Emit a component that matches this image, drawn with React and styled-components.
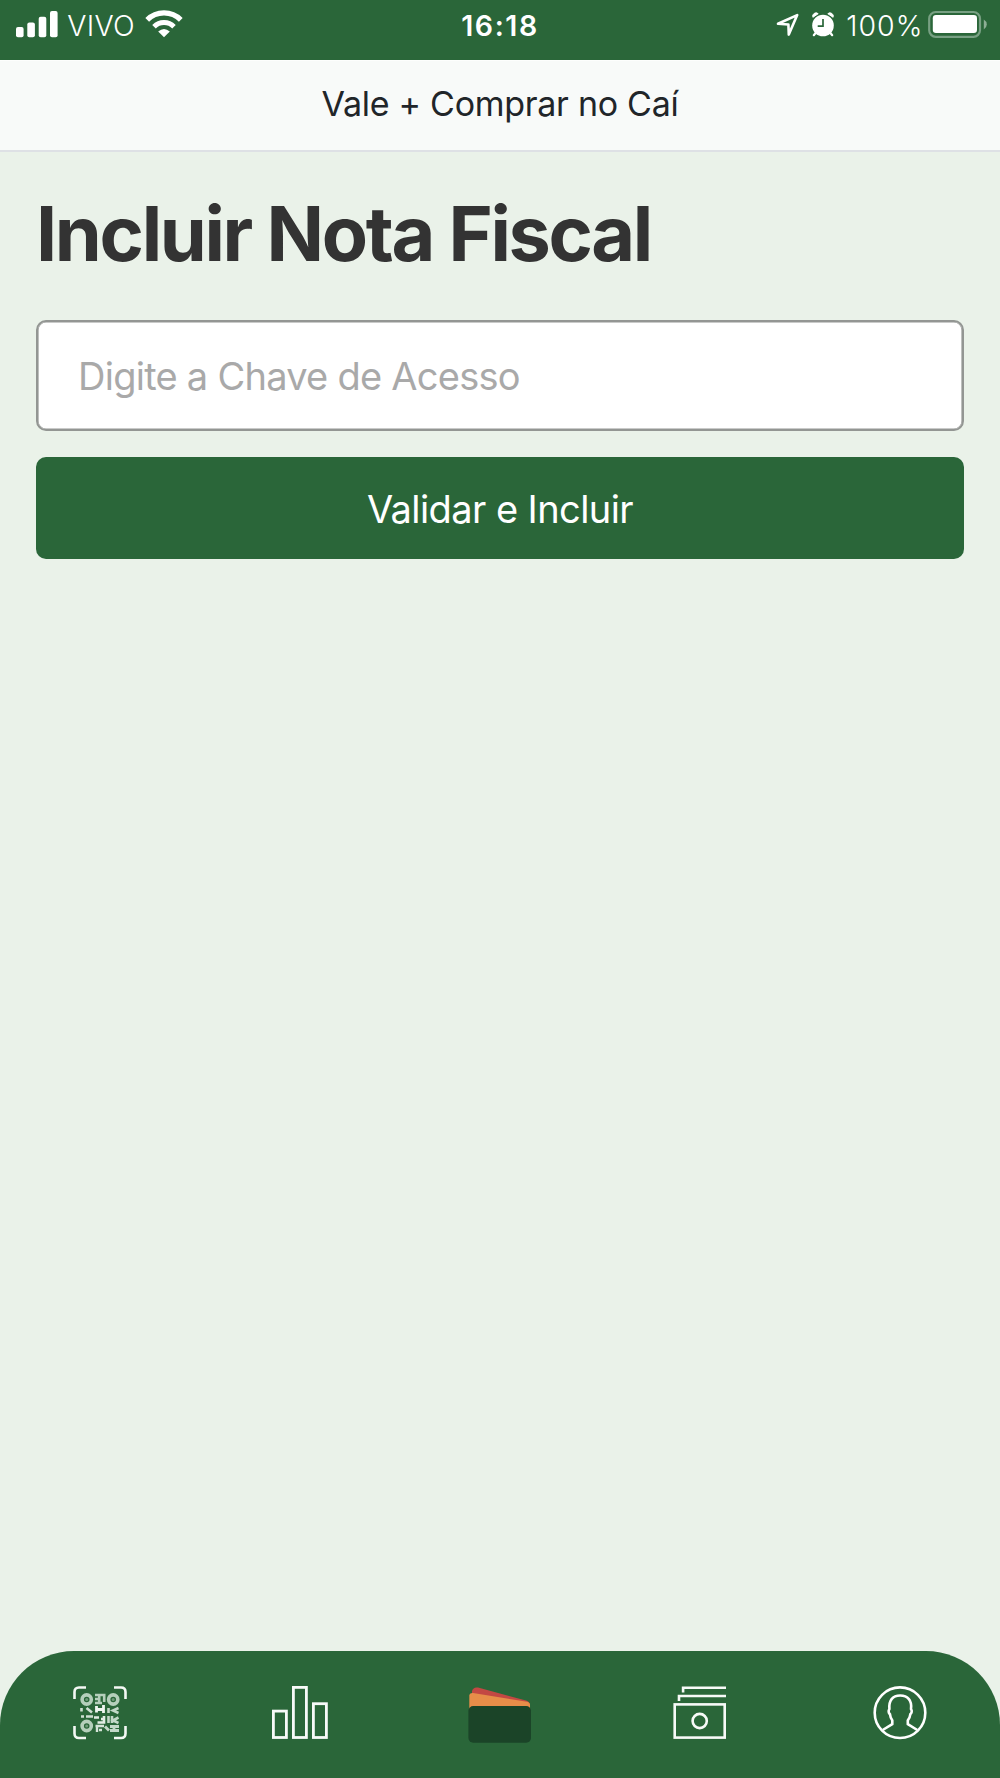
import React from "react";
import styled, { createGlobalStyle } from "styled-components";

const green = "#2a6639";

const GlobalStyle = createGlobalStyle`
  *, *::before, *::after { box-sizing: border-box; }
  body { margin: 0; background: #eaf2e9; font-family: Inter, Roboto, "Liberation Sans", sans-serif; }
`;

const Screen = styled.div`
  display: flex;
  flex-direction: column;
  width: 1000px;
  height: 1778px;
  background: #eaf2e9;
  overflow: hidden;
`;

const StatusBar = styled.header`
  display: grid;
  grid-template-columns: 1fr auto 1fr;
  height: 60px;
  flex: none;
  padding: 0 13px;
  background: ${green};
  color: #fff;
`;

const StatusGroup = styled.div`
  display: flex;
  align-items: flex-start;
  justify-content: ${(p) => (p.$end ? "flex-end" : "flex-start")};
`;

const StatusText = styled.span`
  display: block;
  margin: ${(p) => p.$margin || "0"};
  padding-top: 8px;
  font-size: 28.5px;
  line-height: 35px;
  white-space: nowrap;
  font-weight: ${(p) => p.$weight || 300};
  letter-spacing: ${(p) => p.$spacing || "0"};
`;

const Glyph = styled.svg`
  display: block;
  flex: none;
  overflow: visible;
  margin: ${(p) => p.$margin || "0"};
`;

const TitleBar = styled.div`
  display: flex;
  justify-content: center;
  align-items: center;
  flex: none;
  height: 92px;
  padding-bottom: 3px;
  background: #f8faf9;
  border-top: 1px solid #fdfefd;
  border-bottom: 2px solid #dee1e5;
  color: #212529;
  font-size: 34px;
  line-height: 42px;
  letter-spacing: -0.28px;
`;

const Main = styled.main`
  flex: 1;
  display: flex;
  flex-direction: column;
  padding: 36px 36px 0;
`;

const Heading = styled.h1`
  margin: 0 0 40px;
  font-size: 75.5px;
  line-height: 92px;
  font-weight: 700;
  letter-spacing: -2.33px;
  white-space: nowrap;
  color: #333;
`;

const KeyInput = styled.input`
  display: block;
  width: 100%;
  height: 111px;
  margin: 0 0 26px;
  padding: 0 40px;
  border: 2px solid #939693;
  border-radius: 10px;
  box-shadow: inset 0 0 0 0.6px #939693;
  background: #fff;
  font: 400 38px/46px Inter, Roboto, "Liberation Sans", sans-serif;
  letter-spacing: -0.74px;
  color: #333;
  outline: none;
  &::placeholder { color: #a9a9a9; opacity: 1; }
`;

const SubmitButton = styled.button`
  display: block;
  width: 100%;
  height: 102px;
  padding: 2px 0 0;
  border: 0;
  border-radius: 10px;
  background: ${green};
  color: #fff;
  font: 400 38px/46px Inter, Roboto, "Liberation Sans", sans-serif;
  letter-spacing: -0.58px;
`;

const TabBar = styled.nav`
  display: grid;
  grid-template-columns: repeat(5, 1fr);
  flex: none;
  height: 127px;
  padding-top: 32px;
  border-radius: 74px 74px 0 0;
  background: ${green};
`;

const Tab = styled.a`
  display: flex;
  justify-content: center;
  align-items: flex-start;
`;

const TabIcon = ({ children, label }) => (
  <Tab aria-label={label}>
    <Glyph width="60" height="60" viewBox="0 0 60 60" fill="none">
      {children}
    </Glyph>
  </Tab>
);

const Signal = () => (
  <Glyph $margin="0 0 0 3px" width="42" height="60" viewBox="0 0 42 60" fill="#fff">
    <rect x="0" y="27" width="7.6" height="10.2" rx="2" />
    <rect x="11.3" y="22.4" width="7.6" height="14.8" rx="2" />
    <rect x="22.7" y="16.8" width="7.6" height="20.4" rx="2" />
    <rect x="34" y="11" width="7.6" height="26.2" rx="2" />
  </Glyph>
);

const Wifi = () => (
  <Glyph width="38" height="60" viewBox="0 0 38 60" fill="none" stroke="#fff">
    <path d="M2.2 19.9A23.8 23.8 0 0 1 35.8 19.9" strokeWidth="5.3" />
    <path d="M9 26.7A14.2 14.2 0 0 1 29 26.7" strokeWidth="5" />
    <path d="M19 37.2L13.2 31.4Q19 26.4 24.8 31.4Z" fill="#fff" stroke="none" />
  </Glyph>
);

const Arrow = () => (
  <Glyph $margin="0 10.5px 0 0" width="24" height="60" viewBox="0 0 24 60" fill="none">
    <path d="M2 23.8L21.2 15.1L12.8 34.6L12.4 24.5Z" stroke="#fff" strokeWidth="2.6" strokeLinejoin="round" />
  </Glyph>
);

const Alarm = () => (
  <Glyph width="24" height="60" viewBox="0 0 24 60" fill="none">
    <circle cx="12" cy="25.5" r="10.8" fill="#fff" />
    <path d="M1.9 17.3A3.3 3.3 0 0 1 7.2 13.7ZM22.1 17.3A3.3 3.3 0 0 0 16.8 13.7Z" fill="#fff" stroke="#fff" strokeWidth="1" strokeLinejoin="round" />
    <path d="M4.8 32.7L2.8 35.2M19.2 32.7L21.2 35.2" stroke="#fff" strokeWidth="2.2" strokeLinecap="round" />
    <path d="M12 19V26.2H6.7" stroke={green} strokeWidth="1.7" />
  </Glyph>
);

const Battery = () => (
  <Glyph width="59" height="60" viewBox="0 0 59 60" fill="none">
    <rect x="1.2" y="12" width="50.8" height="24.8" rx="6.6" stroke="#78a083" strokeWidth="2.2" />
    <rect x="4.8" y="15" width="44.2" height="18" rx="3.2" fill="#fff" />
    <path d="M55.8 19.4Q58.8 21.2 58.8 24.4Q58.8 27.6 55.8 29.4Z" fill="#8dae95" />
  </Glyph>
);

export default function App() {
  return (
    <>
      <GlobalStyle />
      <Screen>
        <StatusBar>
          <StatusGroup>
            <Signal />
            <StatusText $margin="0 10px 0 9.3px" $spacing="0.3px">VIVO</StatusText>
            <Wifi />
          </StatusGroup>
          <StatusText $weight={600} $spacing="1.6px">16:18</StatusText>
          <StatusGroup $end>
            <Arrow />
            <Alarm />
            <StatusText $margin="0 4.6px 0 11.4px" $spacing="1px">100%</StatusText>
            <Battery />
          </StatusGroup>
        </StatusBar>
        <TitleBar>Vale + Comprar no Caí</TitleBar>
        <Main>
          <Heading>Incluir Nota Fiscal</Heading>
          <KeyInput placeholder="Digite a Chave de Acesso" />
          <SubmitButton>Validar e Incluir</SubmitButton>
        </Main>
        <TabBar>
          <TabIcon label="QR">
            <path d="M4.5 16V9Q4.5 4.5 9 4.5H16M44 4.5H51Q55.5 4.5 55.5 9V16M55.5 43V50.5Q55.5 55 51 55H44M16 55H9Q4.5 55 4.5 50.5V43" stroke="#f3f8f4" strokeWidth="2.6" />
            <g stroke="#b5cfbb" strokeWidth="3.6">
              <circle cx="16.7" cy="16.5" r="4.6" />
              <circle cx="43.2" cy="16.5" r="4.6" />
              <circle cx="16.7" cy="43" r="4.6" />
            </g>
            <g fill="#6f9a79">
              <circle cx="16.7" cy="16.5" r="1.5" />
              <circle cx="43.2" cy="16.5" r="1.5" />
              <circle cx="16.7" cy="43" r="1.5" />
            </g>
            <path d="M25 12H34.2V19M29.2 12V20M25 16H29M25 20H32" stroke="#b5cfbb" strokeWidth="2.6" />
            <path d="M26.5 23V29.5M33.5 22V30M26.5 26.5H34" stroke="#f0f6f1" strokeWidth="2.8" />
            <path d="M27.5 39.5H34V33M31 36H34.5M24 34.5H29" stroke="#e2ede4" strokeWidth="2.6" />
            <path d="M25.5 43H34M27 43V49M32 47H29" stroke="#d5e4d8" strokeWidth="2.4" />
            <path d="M11.5 25V28.5M16.5 25L22 29.5M11 33.5H14M16 33.5H23" stroke="#cfe0d3" strokeWidth="2.6" />
            <path d="M38.5 25V30M48.5 25L43 27.5L48.5 30M38.5 33V40M48.5 34.5L43 37.5L48.5 40M42 33V40" stroke="#c3d8c8" strokeWidth="2.6" />
            <path d="M35 43.5L39 47.5M40 43.5H49M40 47.5H49M44 43V48" stroke="#c3d8c8" strokeWidth="2.8" />
          </TabIcon>
          <TabIcon label="Ranking">
            <g stroke="#f7faf8" strokeWidth="2.8">
              <rect x="3.4" y="28.1" width="13" height="26.4" />
              <rect x="23.4" y="4.4" width="13" height="50.1" />
              <rect x="43.4" y="20.7" width="13" height="33.8" />
            </g>
          </TabIcon>
          <TabIcon label="Carteira">
            <path d="M2 10V8Q3.5 3.5 8 4.6L56 17.5Q60 18.7 60 22L58 24L2 14Z" fill="#c34843" />
            <path d="M-0.7 27V12Q0 9.7 3 10L57 18.8Q60 19.5 60 22V27Z" fill="#e78d49" />
            <rect x="-1.6" y="23" width="62.6" height="36.7" rx="4.8" fill="#1b4428" />
          </TabIcon>
          <TabIcon label="Saldo">
            <g stroke="#f7faf8" strokeWidth="2.6">
              <rect x="4.7" y="21.4" width="50" height="33.2" />
              <circle cx="29.7" cy="38" r="7.1" />
              <path d="M9 18V13H56M13.1 9.6V4.7H56" />
            </g>
          </TabIcon>
          <TabIcon label="Perfil">
            <g stroke="#fff" strokeWidth="2.6" strokeLinejoin="round">
              <circle cx="30" cy="29.7" r="25.3" />
              <path d="M12.7 47L22.3 41.2V37.4C20.8 35.7 20.3 33.8 20 31.3C18.5 30 18.1 27.5 19.4 26.1C18.6 17.5 22.5 12.5 30.2 12.5C37.8 12.5 42.2 17.5 41 26.1C42.3 27.5 41.8 30 40.3 31.3C40 33.8 39.3 35.7 37.8 37.4V41.2L47.3 47" />
            </g>
          </TabIcon>
        </TabBar>
      </Screen>
    </>
  );
}
